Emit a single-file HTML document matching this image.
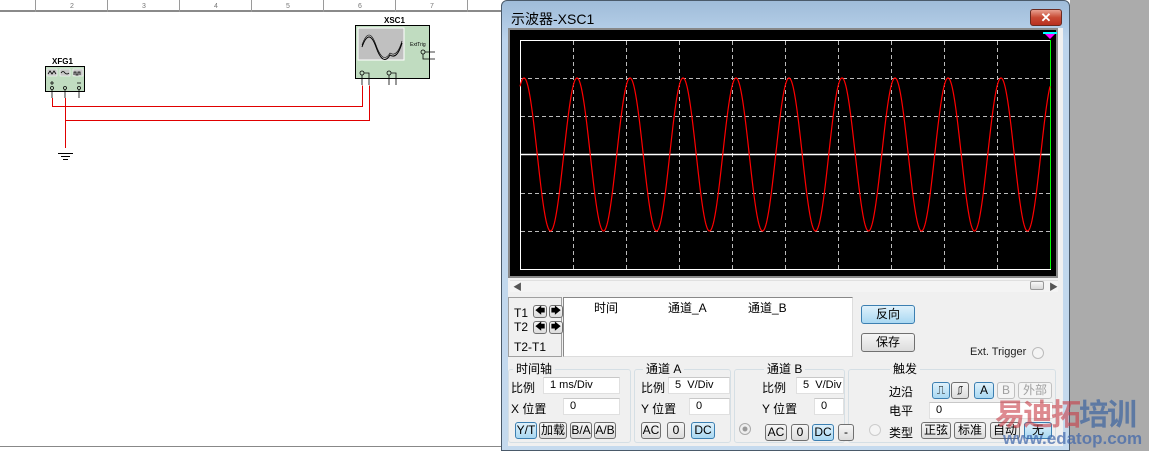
<!DOCTYPE html>
<html><head><meta charset="utf-8"><style>
*{margin:0;padding:0;box-sizing:border-box}
body{width:1149px;height:451px;overflow:hidden;background:#fff;position:relative;font-family:"Liberation Sans","Noto Sans CJK SC",sans-serif;font-size:12px;color:#000}
.a{position:absolute}
.btn{position:absolute;border:1px solid #707070;border-radius:3px;background:linear-gradient(#f6f6f6,#dcdcdc);font-size:12px;text-align:center;line-height:15px;height:17px}
.btn.on{background:linear-gradient(#dff1fb,#a9d8f2);border-color:#3c7fb1}
.btn.dis{color:#a0a0a0;border-color:#c0c0c0;background:#f4f4f4}
.inp{position:absolute;background:#fff;border:1px solid #e0e0e0;border-top-color:#c8c8c8;height:17px;font-size:11px;line-height:15px;padding-left:6px}
.grp{position:absolute;border:1px solid #d5dfe5;border-radius:3px}
.gl{position:absolute;background:#f0f0f0;padding:0 3px;font-size:12px;line-height:14px}
</style></head><body>
<div class="a" style="left:0;top:0;width:501px;height:12px;background:#fff;border-bottom:2px solid #8a8a8a"></div>
<svg class="a" style="left:0;top:0" width="501" height="451">
<g stroke="#9a9a9a" stroke-width="1">
<line x1="35.5" y1="0" x2="35.5" y2="12"/><line x1="107.5" y1="0" x2="107.5" y2="12"/><line x1="179.5" y1="0" x2="179.5" y2="12"/><line x1="251.5" y1="0" x2="251.5" y2="12"/><line x1="323.5" y1="0" x2="323.5" y2="12"/><line x1="395.5" y1="0" x2="395.5" y2="12"/><line x1="467.5" y1="0" x2="467.5" y2="12"/></g>
<g font-size="7" fill="#777" font-family="Liberation Sans"><text x="70" y="8">2</text><text x="142" y="8">3</text><text x="214" y="8">4</text><text x="286" y="8">5</text><text x="358" y="8">6</text><text x="430" y="8">7</text></g>
<text x="52" y="64" font-size="8" font-weight="bold" font-family="Liberation Sans">XFG1</text>
<rect x="45.5" y="66.5" width="39" height="25" fill="#c0dcc0" stroke="#000"/>
<rect x="47" y="69" width="10" height="7" fill="#c8c8c8" stroke="#fff" stroke-width=".5"/><rect x="60" y="69" width="10" height="7" fill="#c8c8c8" stroke="#fff" stroke-width=".5"/><rect x="73" y="69" width="10" height="7" fill="#c8c8c8" stroke="#fff" stroke-width=".5"/>
<g fill="none" stroke="#000" stroke-width=".8"><path d="M48 74l2-3 2 3 2-3 2 3"/><path d="M61 73q2-3 4 0q2 2 4 0"/><path d="M74 75v-3h2v3h2v-3h2v3"/>
<circle cx="52" cy="88" r="1.5"/><circle cx="65" cy="88" r="1.5"/><circle cx="79" cy="88" r="1.5"/>
<path d="M50 83h4M52 81v4M77 83h4"/><line x1="52" y1="90" x2="52" y2="98"/><line x1="65" y1="90" x2="65" y2="98"/><line x1="79" y1="90" x2="79" y2="98"/></g>
<text x="384" y="23" font-size="8" font-weight="bold" font-family="Liberation Sans">XSC1</text>
<rect x="355.5" y="25.5" width="74" height="53" fill="#c0dcc0" stroke="#000"/>
<rect x="358" y="28" width="46" height="32" fill="#c0c0c0" stroke="#fff"/>
<path d="M362 47q7-20 14 0t14 8q7 5 12-12" fill="none" stroke="#000"/>
<path d="M362 45q7-20 14 0t14 8q7 5 12-12" fill="none" stroke="#000" stroke-width=".6"/>
<text x="410" y="46" font-size="5" font-family="Liberation Sans">ExtTrig</text>
<g fill="none" stroke="#000" stroke-width=".8"><circle cx="423" cy="52" r="2"/><path d="M425 52h10M423 54v5h12"/>
<circle cx="362" cy="73" r="2"/><circle cx="389" cy="73" r="2"/><path d="M362 75v10M364 73h5v12M389 75v10M391 73h5v12"/></g>
<g fill="none" stroke="#e00000" stroke-width="1"><path d="M52.5 98v8.5h310v-21"/><path d="M65.5 98v22.5h304v-35"/><path d="M65.5 120v28"/></g>
<g stroke="#000"><line x1="58" y1="153.5" x2="73" y2="153.5"/><line x1="61" y1="156.5" x2="70" y2="156.5"/><line x1="63" y1="159.5" x2="68" y2="159.5"/></g>
<line x1="0" y1="446.5" x2="501" y2="446.5" stroke="#888"/>
</svg>
<div class="a" style="left:1070px;top:0;width:79px;height:451px;background:#ababab"></div>
<div class="a" style="left:501px;top:0;width:569px;height:451px;background:linear-gradient(#9fbcd9,#bcd4ec 40px,#c5daee);border:1px solid #4a5a6a;border-radius:6px 6px 0 0"></div>
<div class="a" style="left:511px;top:9px;font-size:14px;color:#000">示波器-XSC1</div>
<div class="a" style="left:1030px;top:9px;width:32px;height:17px;border:1px solid #6a2a20;border-radius:3px;background:linear-gradient(#e8a090,#c84a34 50%,#b83020);color:#fff;font-weight:bold;text-align:center;line-height:15px;font-size:13px">✕</div>
<div class="a" style="left:508px;top:28px;width:555px;height:418px;background:#f0f0f0"></div>
<div class="a" style="left:508px;top:28px;width:550px;height:250px;background:#000;border:2px solid #888"></div>
<svg class="a" style="left:0;top:0" width="1149" height="451">
<g stroke="#bbb" stroke-dasharray="4,3" stroke-width="1">
<line x1="573.5" y1="41" x2="573.5" y2="269"/><line x1="626.5" y1="41" x2="626.5" y2="269"/><line x1="679.5" y1="41" x2="679.5" y2="269"/><line x1="732.5" y1="41" x2="732.5" y2="269"/><line x1="785.5" y1="41" x2="785.5" y2="269"/><line x1="838.5" y1="41" x2="838.5" y2="269"/><line x1="891.5" y1="41" x2="891.5" y2="269"/><line x1="944.5" y1="41" x2="944.5" y2="269"/><line x1="997.5" y1="41" x2="997.5" y2="269"/>
<line x1="521" y1="78.5" x2="1050" y2="78.5"/><line x1="521" y1="116.5" x2="1050" y2="116.5"/><line x1="521" y1="193.5" x2="1050" y2="193.5"/><line x1="521" y1="231.5" x2="1050" y2="231.5"/>
</g>
<rect x="520.5" y="40.5" width="530" height="229" fill="none" stroke="#fff"/>
<line x1="520" y1="154.5" x2="1050" y2="154.5" stroke="#fff" stroke-width="1.5"/>
<line x1="1050.5" y1="40" x2="1050.5" y2="269" stroke="#0f0"/>
<path d="M1043 32h14l-7 7z" fill="#f0f"/><path d="M1043 32h14v2h-14z" fill="#0ff"/>
<polyline id="sw" fill="none" stroke="#f00" stroke-width="1.2" points=""/>
</svg>
<script>
var p=[];for(var x=520;x<=1050;x+=0.5){p.push(x+","+(154.5-76.5*Math.cos(2*Math.PI*(x-524)/53)).toFixed(1));}
document.getElementById('sw').setAttribute('points',p.join(' '));
</script>
<div class="a" style="left:510px;top:280px;width:548px;height:12px;background:#f4f4f4;border-top:1px solid #e0e0e0"></div>
<div class="a" style="left:513px;top:280px;font-size:9px;color:#555">◀</div>
<div class="a" style="left:1049px;top:280px;font-size:9px;color:#555">▶</div>
<div class="a" style="left:1030px;top:281px;width:14px;height:9px;border:1px solid #999;border-radius:2px;background:linear-gradient(#f8f8f8,#d8d8d8)"></div>
<div class="a" style="left:508px;top:297px;width:54px;height:60px;border:1px solid #a0a0a0"></div>
<div class="a" style="left:514px;top:306px">T1</div><div class="a" style="left:514px;top:320px">T2</div><div class="a" style="left:514px;top:340px">T2-T1</div>
<div class="btn" style="left:533px;top:305px;width:14px;height:13px;line-height:11px;font-size:10px">🡄</div>
<div class="btn" style="left:549px;top:305px;width:14px;height:13px;line-height:11px;font-size:10px">🡆</div>
<div class="btn" style="left:533px;top:321px;width:14px;height:13px;line-height:11px;font-size:10px">🡄</div>
<div class="btn" style="left:549px;top:321px;width:14px;height:13px;line-height:11px;font-size:10px">🡆</div>
<div class="a" style="left:563px;top:297px;width:290px;height:60px;background:#fff;border:1px solid #888;border-right-color:#ddd;border-bottom-color:#ddd"></div>
<div class="a" style="left:594px;top:299px">时间</div><div class="a" style="left:668px;top:299px">通道_A</div><div class="a" style="left:748px;top:299px">通道_B</div>
<div class="btn on" style="left:861px;top:305px;width:54px;height:19px;line-height:17px">反向</div>
<div class="btn" style="left:861px;top:333px;width:54px;height:19px;line-height:17px">保存</div>
<div class="a" style="left:970px;top:346px;font-size:11px;color:#222">Ext. Trigger</div>
<div class="a" style="left:1032px;top:347px;width:12px;height:12px;border-radius:50%;border:1px solid #bbb;background:#f4f4f4"></div>
<div class="grp" style="left:508px;top:369px;width:123px;height:74px"></div><div class="gl" style="left:513px;top:362px">时间轴</div>
<div class="grp" style="left:634px;top:369px;width:97px;height:74px"></div><div class="gl" style="left:643px;top:362px">通道 A</div>
<div class="grp" style="left:734px;top:369px;width:111px;height:74px"></div><div class="gl" style="left:764px;top:362px">通道 B</div>
<div class="grp" style="left:848px;top:369px;width:208px;height:74px"></div><div class="gl" style="left:890px;top:362px">触发</div>
<div class="a" style="left:511px;top:379px">比例</div><div class="inp" style="left:543px;top:377px;width:77px">1 ms/Div</div>
<div class="a" style="left:511px;top:400px">X 位置</div><div class="inp" style="left:563px;top:398px;width:57px">0</div>
<div class="btn on" style="left:515px;top:422px;width:22px">Y/T</div><div class="btn" style="left:539px;top:422px;width:28px">加载</div><div class="btn" style="left:570px;top:422px;width:22px">B/A</div><div class="btn" style="left:594px;top:422px;width:22px">A/B</div>
<div class="a" style="left:641px;top:379px">比例</div><div class="inp" style="left:668px;top:377px;width:62px">5 &nbsp;V/Div</div>
<div class="a" style="left:641px;top:400px">Y 位置</div><div class="inp" style="left:689px;top:398px;width:41px">0</div>
<div class="btn" style="left:641px;top:422px;width:20px">AC</div><div class="btn" style="left:667px;top:422px;width:18px">0</div><div class="btn on" style="left:691px;top:422px;width:24px">DC</div>
<div class="a" style="left:739px;top:423px;width:12px;height:12px;border-radius:50%;border:1px solid #aaa;background:radial-gradient(#999 30%,#eee 40%)"></div>
<div class="a" style="left:762px;top:379px">比例</div><div class="inp" style="left:796px;top:377px;width:48px">5 &nbsp;V/Div</div>
<div class="a" style="left:762px;top:400px">Y 位置</div><div class="inp" style="left:814px;top:398px;width:30px">0</div>
<div class="btn" style="left:765px;top:424px;width:22px">AC</div><div class="btn" style="left:791px;top:424px;width:18px">0</div><div class="btn on" style="left:812px;top:424px;width:22px">DC</div><div class="btn" style="left:838px;top:424px;width:16px">-</div>
<div class="a" style="left:869px;top:424px;width:12px;height:12px;border-radius:50%;border:1px solid #ccc;background:#f4f4f4"></div>
<div class="a" style="left:889px;top:383px">边沿</div><div class="a" style="left:889px;top:402px">电平</div><div class="a" style="left:889px;top:424px">类型</div>
<div class="btn on" style="left:932px;top:382px;width:18px">⎍</div><div class="btn" style="left:951px;top:382px;width:18px">⎎</div>
<div class="btn on" style="left:974px;top:382px;width:20px">A</div><div class="btn dis" style="left:997px;top:382px;width:18px">B</div><div class="btn dis" style="left:1018px;top:382px;width:34px">外部</div>
<div class="inp" style="left:929px;top:402px;width:124px">0</div>
<div class="btn" style="left:921px;top:422px;width:30px">正弦</div><div class="btn" style="left:954px;top:422px;width:32px">标准</div><div class="btn" style="left:990px;top:422px;width:30px">自动</div><div class="btn on" style="left:1024px;top:422px;width:28px">无</div>
<div class="a" style="left:995px;top:395px;font-size:30px;font-weight:bold;letter-spacing:-2px;white-space:nowrap;font-family:'Noto Sans CJK SC',sans-serif;line-height:34px"><span style="color:rgba(200,60,70,.6)">易迪拓</span><span style="color:rgba(60,100,160,.7)">培训</span></div>
<div class="a" style="left:1003px;top:430px;font-size:17px;font-weight:bold;color:rgba(60,100,170,.7);white-space:nowrap;line-height:18px">www.edatop.com</div>
</body></html>
